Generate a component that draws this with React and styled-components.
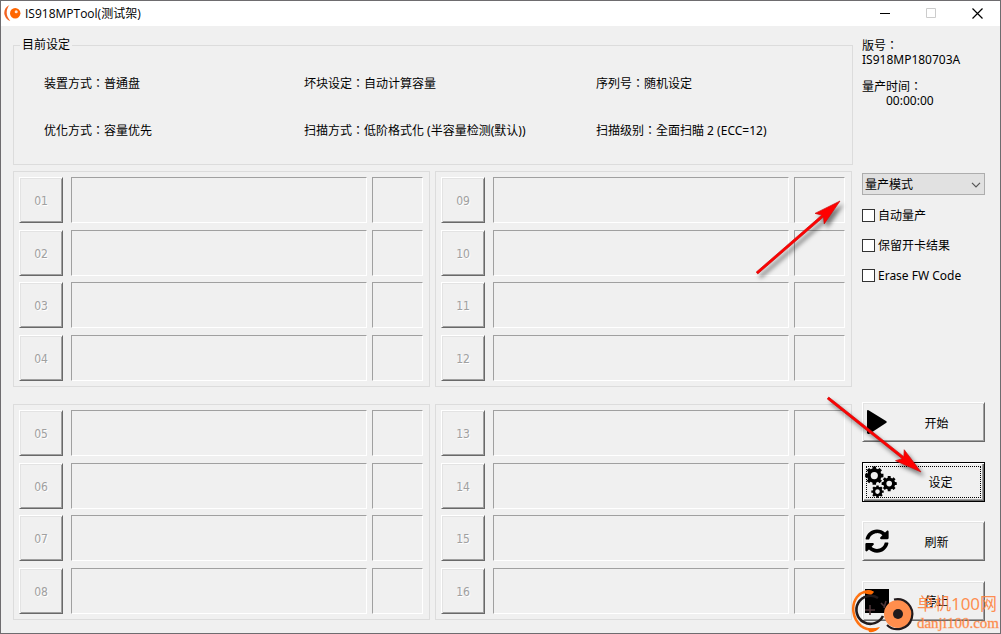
// App.jsx
import React, { useState } from 'react';
import styled, { createGlobalStyle, ThemeProvider } from 'styled-components';
import { FaSyncAlt } from 'react-icons/fa';

const theme = {
  colors: {
    face: '#f0f0f0',
    frame: '#6e6c6f',
    groupLine: '#dcdcdc',
    light: '#ffffff',
    lightInner: '#e3e3e3',
    shadow: '#a0a0a0',
    shadowDark: '#696969',
    text: '#000000',
    disabled: '#a0a0a0',
  },
  fonts: {
    ui: '"Noto Sans", "Noto Sans CJK TC", sans-serif',
    title: '"Open Sans", "Noto Sans CJK TC", sans-serif',
    digits: '"DejaVu Sans Condensed", "DejaVu Sans", sans-serif',
  },
};

const SETTINGS = [
  '装置方式：普通盘',
  '坏块设定：自动计算容量',
  '序列号：随机设定',
  '优化方式：容量优先',
  '扫描方式：低阶格式化 (半容量检测(默认))',
  '扫描级别：全面扫瞄 2 (ECC=12)',
];

const BANKS = [
  ['01', '02', '03', '04'],
  ['09', '10', '11', '12'],
  ['05', '06', '07', '08'],
  ['13', '14', '15', '16'],
];

const OPTIONS = [
  { id: 'auto', label: '自动量产' },
  { id: 'keep', label: '保留开卡结果' },
  { id: 'erase', label: 'Erase FW Code' },
];

const polar = (cx, cy, r, a) => `${(cx + r * Math.cos(a)).toFixed(2)} ${(cy + r * Math.sin(a)).toFixed(2)}`;

// Contorno dentado con agujero central
const gearPath = (cx, cy, r, hole, teeth = 8) => {
  const step = (Math.PI * 2) / teeth;
  const points = [];
  for (let i = 0; i < teeth; i += 1) {
    const a = i * step;
    points.push(polar(cx, cy, r * 0.78, a - step * 0.32));
    points.push(polar(cx, cy, r, a - step * 0.24));
    points.push(polar(cx, cy, r, a + step * 0.24));
    points.push(polar(cx, cy, r * 0.78, a + step * 0.32));
  }
  return `M${points.join('L')}ZM${cx - hole} ${cy}a${hole} ${hole} 0 1 0 ${hole * 2} 0a${hole} ${hole} 0 1 0 ${-hole * 2} 0Z`;
};

const PlayIcon = () => (
  <svg width='24' height='24' viewBox='0 0 24 24' aria-hidden='true'>
    <path d='M3.500 .3 21 10.900Q22.500 12 21 13.100L4.500 23.700Q2 24.500 2 22.500V1.500Q2-.5 3.500 .3Z' />
  </svg>
);

const GearsIcon = () => (
  <svg width='32' height='32' viewBox='0 0 32 32' fillRule='evenodd' aria-hidden='true'>
    <path d={gearPath(9.3, 9.6, 9.3, 3.6)} />
    <path d={gearPath(24.2, 17.6, 7.7, 2.8)} />
    <path d={gearPath(12.5, 25.6, 6.3, 2.3)} />
  </svg>
);

const StopIcon = () => (
  <svg width='24' height='24' viewBox='0 0 24 24' aria-hidden='true'>
    <path d='M0 0h24v24H0Z' />
  </svg>
);

const ACTIONS = [
  { id: 'start', label: '开始', icon: <PlayIcon /> },
  { id: 'setup', label: '设定', icon: <GearsIcon />, active: true },
  { id: 'refresh', label: '刷新', icon: <FaSyncAlt size={24} aria-hidden='true' /> },
  { id: 'stop', label: '停止', icon: <StopIcon /> },
];

const AppIcon = () => (
  <svg width='17' height='17' viewBox='0 0 17 17' aria-hidden='true'>
    <path d='M5.500 0C1 2-.5 6.500 .6 10.100 1.600 13.500 3.800 15.300 6.300 16 3.800 13 2.600 10.500 2.700 7.500 2.800 4.500 3.800 2 5.500 0Z' fill='#f26322' />
    <circle cx='11.200' cy='8.200' r='5.200' fill='#f60' />
    <circle cx='12.200' cy='6.800' r='1.500' fill='#ffe6d6' />
  </svg>
);

const Arrow = ({ className, width, height, from, to }) => {
  const length = Math.hypot(to[0] - from[0], to[1] - from[1]);
  const dx = (to[0] - from[0]) / length;
  const dy = (to[1] - from[1]) / length;
  const at = (back, side) => `${to[0] - dx * back - dy * side},${to[1] - dy * back + dx * side}`;
  const outline = [
    at(0, 0), at(27, 7), at(23, 1.3), at(length, 1.2), at(length, -1.2), at(23, -1.3), at(27, -7),
  ].join(' ');

  return (
    <svg className={className} width={width} height={height} viewBox={`0 0 ${width} ${height}`} aria-hidden='true'>
      <polygon points={outline} fill='#ff0000' stroke='#c81010' strokeWidth='0.7' strokeLinejoin='round' />
    </svg>
  );
};

const Watermark = () => (
  <WatermarkWrapper>
    <svg width='66' height='44' viewBox='0 0 66 44' fill='none' aria-hidden='true'>
      <path d='M22 3.500C17 .5 10 3 6 8 0 16 1 29 10 37q6 4.500 15 3.500' stroke='#ff7414' strokeWidth='2.500' />
      <path d='M12 4Q18-1 23 3L20 6ZM17 39Q22 40 29 38 25 44 18 43Z' fill='#ff6a00' />
      <path d='M27 9A14 14 0 1 0 32 27' stroke='#211a1c' strokeWidth='2.600' />
      <path d='M14 21h10M19 16v10M30 14l4 4M35 12l-2 7' stroke='#4d3538' strokeWidth='1.600' />
      <circle cx='47' cy='25' r='14' fill='#ff8e4d' />
      <path d='M43 10.500A15 15 0 1 1 36 36' stroke='#211a1c' strokeWidth='2.200' />
      <circle cx='47' cy='25' r='5' fill='#211a1c' />
    </svg>
    <WatermarkText>
      <WatermarkName>单机100网</WatermarkName>
      <WatermarkSite>danji100.com</WatermarkSite>
    </WatermarkText>
  </WatermarkWrapper>
);

const Bank = ({ slots }) => (
  <BankBox>
    {slots.map((slot) => (
      <SlotRow key={slot}>
        <SlotButton type='button' disabled>{slot}</SlotButton>
        <SlotPanel />
        <SlotPanel />
      </SlotRow>
    ))}
  </BankBox>
);

const App = () => {
  const [checked, setChecked] = useState({});

  const toggle = (id) => setChecked((prev) => ({ ...prev, [id]: !prev[id] }));

  return (
    <ThemeProvider theme={theme}>
      <GlobalStyle />
      <Window>
        <TitleBar>
          <AppIcon />
          <Title>IS918MPTool(测试架)</Title>
          <CaptionButton type='button' aria-label='最小化'>
            <svg width='11' height='11' viewBox='0 0 11 11'><path d='M0 5.500h10' stroke='#000' /></svg>
          </CaptionButton>
          <CaptionButton type='button' aria-label='最大化' disabled>
            <svg width='11' height='11' viewBox='0 0 11 11'><path d='M.5 .5h9v9h-9Z' fill='none' stroke='#ccc' /></svg>
          </CaptionButton>
          <CaptionButton type='button' aria-label='关闭'>
            <svg width='11' height='11' viewBox='0 0 11 11'><path d='M.5 .5l10 10M10.500 .5l-10 10' stroke='#000' strokeWidth='1.200' /></svg>
          </CaptionButton>
        </TitleBar>

        <Body>
          <Main>
            <SettingsGroup>
              <legend>目前设定</legend>
              <SettingsGrid>
                {SETTINGS.map((item) => <span key={item}>{item}</span>)}
              </SettingsGrid>
            </SettingsGroup>
            <Banks>
              {BANKS.map((slots) => <Bank key={slots[0]} slots={slots} />)}
            </Banks>
          </Main>

          <Sidebar>
            <Info>
              <p>版号：</p>
              <p>IS918MP180703A</p>
            </Info>
            <Info>
              <p>量产时间：</p>
              <Elapsed>00:00:00</Elapsed>
            </Info>

            <SelectWrapper>
              <Select aria-label='模式' defaultValue='mp'>
                <option value='mp'>量产模式</option>
              </Select>
              <svg width='10' height='6' viewBox='0 0 10 6' fill='none' aria-hidden='true'>
                <path d='M1 .8 5 4.800 9 .8' stroke='#555' strokeWidth='1.200' />
              </svg>
            </SelectWrapper>

            <Options>
              {OPTIONS.map(({ id, label }) => (
                <Option key={id}>
                  <Checkbox type='checkbox' checked={!!checked[id]} onChange={() => toggle(id)} />
                  {label}
                </Option>
              ))}
            </Options>

            <Actions>
              {ACTIONS.map(({ id, label, icon, active }) => (
                <ActionButton key={id} type='button' $active={active}>
                  {icon}
                  <span>{label}</span>
                </ActionButton>
              ))}
            </Actions>
          </Sidebar>
        </Body>

        <SlotArrow width={110} height={100} from={[18, 83]} to={[101, 11]} />
        <SetupArrow width={120} height={100} from={[8, 8]} to={[101, 82]} />
        <Watermark />
      </Window>
    </ThemeProvider>
  );
};

export default App;


// Estilizado
const GlobalStyle = createGlobalStyle`
  * {
    box-sizing: border-box;
  }
  body {
    margin: 0;
    background: ${theme.colors.face};
    color: ${theme.colors.text};
    font: 12px/14px ${theme.fonts.ui};
  }
  p {
    margin: 0;
  }
  button, select, input {
    font: inherit;
    color: inherit;
  }
`;

const Window = styled.div`
  position: relative;
  display: flex;
  flex-direction: column;
  min-height: 100vh;
  border: 1px solid ${({ theme }) => theme.colors.frame};
  background: ${({ theme }) => theme.colors.face};
  overflow: hidden;
`;

const TitleBar = styled.header`
  display: flex;
  align-items: center;
  height: 25px;
  padding-left: 3px;
  background: #fff;
`;

const Title = styled.h1`
  flex: 1;
  margin: 0;
  padding-left: 4px;
  font: 12px/16px ${({ theme }) => theme.fonts.title};
`;

const CaptionButton = styled.button`
  display: flex;
  align-items: center;
  justify-content: center;
  width: 46px;
  height: 100%;
  padding: 0;
  border: 0;
  background: none;
`;

const Body = styled.div`
  flex: 1;
  display: flex;
  gap: 9px;
  padding: 12px 15px 12px 12px;
`;

const Main = styled.main`
  flex: 1;
  display: flex;
  flex-direction: column;
  gap: 6px;
  min-width: 0;
  padding-bottom: 1px;
`;

const SettingsGroup = styled.fieldset`
  margin: 0;
  padding: 25px 13px 26px 30px;
  border: 1px solid ${({ theme }) => theme.colors.groupLine};

  legend {
    margin-left: -24px;
    padding: 0 2px;
  }
`;

const SettingsGrid = styled.div`
  display: grid;
  grid-template-columns: 260fr 292fr 243fr;
  row-gap: 33px;
  white-space: nowrap;
`;

const Banks = styled.div`
  flex: 1;
  display: grid;
  grid-template-columns: 1fr 1fr;
  grid-template-rows: 1fr 1fr;
  gap: 17px 5px;
  margin-right: 1px;
`;

const BankBox = styled.section`
  display: flex;
  flex-direction: column;
  justify-content: space-between;
  padding: 5px 6px 5px 5px;
  border: 1px solid ${({ theme }) => theme.colors.groupLine};
`;

const SlotRow = styled.div`
  display: grid;
  grid-template-columns: 44px 1fr 51px;
  column-gap: 5px;
  height: 46px;
`;

const SlotButton = styled.button`
  padding: 2px 0 0;
  border: 1px solid;
  border-color: ${({ theme: { colors } }) => `${colors.light} ${colors.shadowDark} ${colors.shadowDark} ${colors.light}`};
  box-shadow: inset 1px 1px ${({ theme }) => theme.colors.lightInner}, inset -1px -1px ${({ theme }) => theme.colors.shadow};
  background: ${({ theme }) => theme.colors.face};
  color: ${({ theme }) => theme.colors.disabled};
  font-family: ${({ theme }) => theme.fonts.digits};
  text-shadow: 1px 1px #fff;
`;

const SlotPanel = styled.div`
  border: 1px solid;
  border-color: ${({ theme: { colors } }) => `${colors.shadow} ${colors.light} ${colors.light} ${colors.shadow}`};

  ${SlotButton} + & {
    margin-left: 3px;
  }
`;

const Sidebar = styled.aside`
  display: flex;
  flex-direction: column;
  width: 123px;
  padding-top: 1px;
`;

const Info = styled.div`
  margin-bottom: 13px;
  white-space: nowrap;
`;

const Elapsed = styled.p`
  padding-left: 24px;
`;

const SelectWrapper = styled.div`
  position: relative;
  margin-top: 52px;

  svg {
    position: absolute;
    right: 4px;
    top: 9px;
    pointer-events: none;
  }
`;

const Select = styled.select`
  display: block;
  appearance: none;
  width: 100%;
  height: 22px;
  padding: 2px 18px 0 2px;
  border: 1px solid #adadad;
  border-radius: 0;
  background: #e1e1e1;
`;

const Options = styled.div`
  display: flex;
  flex-direction: column;
  gap: 15px;
  margin-top: 13px;
`;

const Option = styled.label`
  display: flex;
  align-items: center;
  gap: 3px;
  height: 15px;
  white-space: nowrap;
`;

const Checkbox = styled.input`
  appearance: none;
  flex: none;
  width: 13px;
  height: 13px;
  margin: 0;
  border: 1px solid #333;
  background: #fff;

  &:checked {
    box-shadow: inset 0 0 0 2px #fff;
    background: #333;
  }
`;

const Actions = styled.div`
  flex: 1;
  display: flex;
  flex-direction: column;
  justify-content: space-between;
  margin-top: 119px;
`;

const ActionButton = styled.button`
  display: flex;
  align-items: center;
  height: 40px;
  padding: 0 0 0 2px;
  border: 1px solid;
  border-color: ${({ $active, theme: { colors } }) => ($active
    ? '#000'
    : `${colors.light} ${colors.shadowDark} ${colors.shadowDark} ${colors.light}`)};
  outline: ${({ $active }) => ($active ? '1px dotted #000' : 'none')};
  outline-offset: -5px;
  box-shadow: ${({ $active, theme: { colors } }) => ($active
    ? `inset 1px 1px ${colors.light}, inset -1px -1px ${colors.shadowDark}, inset -2px -2px ${colors.shadow}`
    : `inset 1px 1px ${colors.lightInner}, inset -1px -1px ${colors.shadow}`)};
  background: ${({ theme }) => theme.colors.face};

  span {
    flex: 1;
    padding-top: 3px;
    text-align: center;
  }
`;

const SlotArrow = styled(Arrow)`
  position: absolute;
  right: 151px;
  top: 189px;
  filter: drop-shadow(3px 4px 2px rgba(0, 0, 0, 0.5));
  pointer-events: none;
`;

const SetupArrow = styled(Arrow)`
  position: absolute;
  right: 60px;
  top: 389px;
  filter: drop-shadow(3px 4px 2px rgba(0, 0, 0, 0.5));
  pointer-events: none;
`;

const WatermarkWrapper = styled.div`
  position: absolute;
  right: 1px;
  bottom: 0;
  display: flex;
  align-items: center;
  pointer-events: none;
`;

const WatermarkText = styled.div`
  padding-top: 4px;
  color: rgba(255, 130, 60, 0.9);
  white-space: nowrap;
`;

const WatermarkName = styled.p`
  font: 17px/20px "Noto Sans", "Noto Sans CJK TC", sans-serif;
`;

const WatermarkSite = styled.p`
  font: 15px/18px "Liberation Serif", serif;
  -webkit-text-stroke: 1px rgba(255, 130, 60, 0.3);
`;
